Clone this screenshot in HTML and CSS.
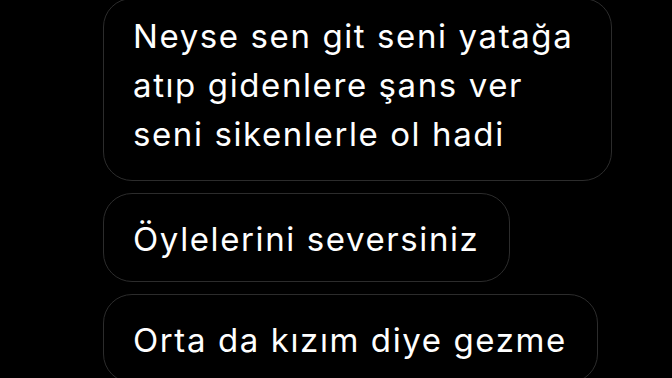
FILE: index.html
```html
<!DOCTYPE html>
<html lang="tr">

<head>
    <meta charset="UTF-8">
    <title>Mesajlar</title>
    <meta name="viewport" content="width=device-width, initial-scale=1">
    <link rel="stylesheet" href="styles.css">
</head>

<body>
    <div class="thread">
        <div class="bubble bubble-multi">Neyse sen git seni yatağa<br>atıp gidenlere şans ver<br>seni sikenlerle ol hadi</div>
        <div class="bubble">Öylelerini seversiniz</div>
        <div class="bubble">Orta da kızım diye gezme</div>
    </div>
</body>

</html>
```

FILE: styles.css
```css
body {
    margin: 0;
    background-color: #000;
    color: #fff;
    font-family: "Inter", "Liberation Sans", sans-serif;
    overflow: hidden;
}

.thread {
    display: flex;
    flex-direction: column;
    align-items: flex-start;
    gap: 12px;
    padding-left: 103px;
    margin-top: -2px;
}

.bubble {
    box-sizing: border-box;
    padding: 21px 30px 17px 29px;
    border: 1.5px solid #2c2c2c;
    border-radius: 29px;
    font-size: 33px;
    line-height: 49px;
    letter-spacing: 1.6px;
    white-space: nowrap;
}

.bubble-multi {
    width: 509px;
    padding-top: 13px;
    padding-bottom: 21px;
}
```
